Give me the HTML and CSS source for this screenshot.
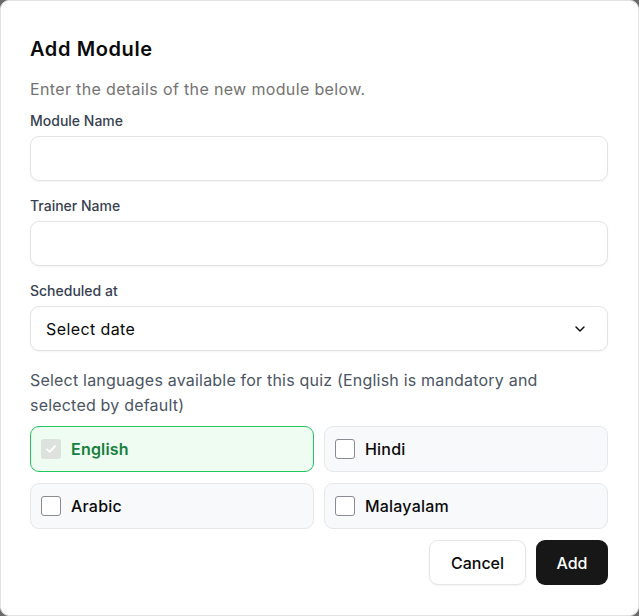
FILE: index.html
```html
<!DOCTYPE html>
<html lang="en">
<head>
<meta charset="utf-8">
<title>Add Module</title>
<link rel="stylesheet" href="styles.css">
</head>
<body>
<div class="dialog">
  <h2 class="title">Add Module</h2>
  <p class="desc">Enter the details of the new module below.</p>
  <div class="field">
    <label class="label">Module Name</label>
    <div class="input"></div>
  </div>
  <div class="field">
    <label class="label">Trainer Name</label>
    <div class="input"></div>
  </div>
  <div class="field">
    <label class="label">Scheduled at</label>
    <div class="input select">
      <span>Select date</span>
      <svg class="chev" width="16" height="16" viewBox="0 0 24 24" fill="none" stroke="#111" stroke-width="2.2" stroke-linecap="round" stroke-linejoin="round"><path d="M6 9l6 6 6-6"/></svg>
    </div>
  </div>
  <p class="langs">Select languages available for this quiz (English is mandatory and selected by default)</p>
  <div class="grid">
    <div class="opt on"><span class="box checked"><svg width="14" height="14" viewBox="0 0 24 24" fill="none" stroke="#fff" stroke-width="3" stroke-linecap="round" stroke-linejoin="round"><path d="M5 12.5l4.5 4.5L19 7"/></svg></span><span>English</span></div>
    <div class="opt"><span class="box"></span><span>Hindi</span></div>
    <div class="opt"><span class="box"></span><span>Arabic</span></div>
    <div class="opt"><span class="box"></span><span>Malayalam</span></div>
  </div>
  <div class="actions">
    <button class="btn ghost">Cancel</button>
    <button class="btn primary">Add</button>
  </div>
</div>
</body>
</html>
```
FILE: styles.css
```css
html, body { margin: 0; padding: 0; }
body {
  background: #6b6b6b;
  font-family: Inter, "Noto Sans", sans-serif;
  width: 639px;
  height: 616px;
  overflow: hidden;
}
.dialog {
  box-sizing: border-box;
  width: 639px;
  height: 616px;
  background: #fff;
  border: 1px solid #e2e2e2;
  border-radius: 9px;
  padding: 34px 30px 30px 29px;
}
.title {
  margin: 0;
  font-size: 20px;
  line-height: 28px;
  font-weight: 600;
  color: #0a0a0a;
  letter-spacing: 0.6px;
}
.desc {
  margin: 14px 0 0;
  font-size: 16px;
  line-height: 24px;
  color: #737373;
  letter-spacing: 0.35px;
}
.field { display: flex; flex-direction: column; margin-top: 15px; }
.desc + .field { margin-top: 10px; }
.label {
  font-size: 14px;
  line-height: 20px;
  font-weight: 500;
  color: #374151;
}
.input {
  box-sizing: border-box;
  margin-top: 5px;
  height: 45px;
  border: 1px solid #e3e3e3;
  border-radius: 9px;
  background: #fff;
  box-shadow: 0 1px 2px rgba(0,0,0,0.05);
}
.select {
  display: flex;
  align-items: center;
  justify-content: space-between;
  padding: 0 19px 0 15px;
  font-size: 16px;
  color: #0a0a0a;
  letter-spacing: 0.4px;
}
.langs {
  margin: 17px 0 0;
  max-width: 545px;
  font-size: 16px;
  line-height: 25px;
  color: #4b5563;
  letter-spacing: 0.2px;
}
.grid {
  margin-top: 8px;
  display: grid;
  grid-template-columns: 1fr 1fr;
  column-gap: 10px;
  row-gap: 11px;
}
.opt {
  box-sizing: border-box;
  height: 46px;
  display: flex;
  align-items: center;
  gap: 10px;
  padding: 0 10px;
  border: 1px solid #e5e7eb;
  border-radius: 9px;
  background: #f8f9fb;
  font-size: 16px;
  font-weight: 500;
  color: #0a0a0a;
  letter-spacing: 0.2px;
}
.opt.on {
  border-color: #22c55e;
  background: #effcf2;
  color: #15803d;
  font-weight: 600;
}
.box {
  box-sizing: border-box;
  width: 20px;
  height: 20px;
  border: 1px solid #8a8a93;
  border-radius: 3px;
  background: #fff;
  display: flex;
  align-items: center;
  justify-content: center;
}
.box.checked {
  border: none;
  background: #dde2de;
}
.actions {
  margin-top: 11px;
  display: flex;
  justify-content: flex-end;
  gap: 10px;
}
.btn {
  font-family: inherit;
  height: 45px;
  border-radius: 9px;
  font-size: 16px;
  font-weight: 500;
  cursor: pointer;
}
.ghost {
  width: 97px;
  background: #fff;
  border: 1px solid #e5e5e5;
  color: #0a0a0a;
  box-shadow: 0 1px 2px rgba(0,0,0,0.05);
}
.primary {
  width: 72px;
  background: #171717;
  border: none;
  color: #fff;
}
```
